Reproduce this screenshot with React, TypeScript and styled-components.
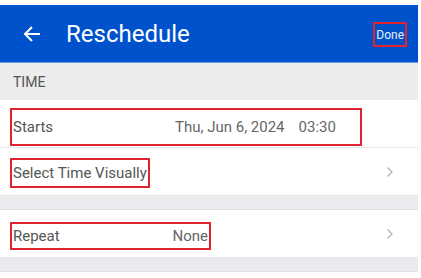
import React, { FC } from "react";
import styled, { createGlobalStyle } from "styled-components";

const GlobalStyle = createGlobalStyle`
  html, body {
    margin: 0;
    padding: 0;
    background: #fff;
  }
  body {
    font-family: Roboto, "Noto Sans", sans-serif;
  }
`;

const Screen = styled.div`
  width: 418px;
  padding-top: 5px;
`;

const Header = styled.div`
  height: 57px;
  background-color: #0052cc;
  border-bottom: 1px solid #6f9be0;
  display: flex;
  align-items: center;
  color: #fff;
`;

const BackButton = styled.button`
  width: 48px;
  height: 100%;
  margin-left: 8px;
  padding: 0;
  border: none;
  background: none;
  display: flex;
  align-items: center;
  justify-content: center;
  color: #fff;
`;

const Title = styled.h1`
  flex: 1;
  margin: 0 0 0 10px;
  font-size: 24px;
  font-weight: 400;
`;

const Marked = styled.div`
  border: 2px solid #e0232e;
  box-sizing: border-box;
  display: flex;
  align-items: center;
`;

const DoneButton = styled(Marked)`
  margin-right: 11px;
  margin-top: 2px;
  height: 25px;
  padding: 0 1px;
  font-size: 12px;
  color: #e8eef8;
`;

const SectionLabel = styled.div`
  height: 37px;
  background-color: #ececec;
  display: flex;
  align-items: center;
  padding-left: 13px;
  font-size: 14px;
  color: #555;
`;

const Row = styled.div`
  height: 47px;
  background: #fff;
  border-bottom: 1px solid #e6e6e6;
  display: flex;
  align-items: center;
  padding: 0 10px;
  font-size: 15px;
  color: #555;
`;

const RowBox = styled(Marked)<{ $width?: number; $height: number; $shift: number }>`
  width: ${({ $width }) => ($width ? `${$width}px` : "auto")};
  height: ${({ $height }) => $height}px;
  margin-top: ${({ $shift }) => $shift}px;
  padding: 0 1px;
`;

const Label = styled.span`
  width: 162px;
`;

const Value = styled.span`
  color: #666;
`;

const Time = styled(Value)`
  margin-left: 14px;
`;

const Chevron = styled.span`
  margin-left: auto;
  margin-right: 14px;
  display: flex;
  color: #b5b5b5;
`;

const Gap = styled.div`
  height: 13px;
  background-color: #e9ebee;
  border-bottom: 1px solid #e2e2e2;
`;

const ChevronIcon = () => (
  <Chevron>
    <svg width="8" height="12" viewBox="0 0 8 12">
      <path d="M1.5 1.5 L6 6 L1.5 10.5" fill="none" stroke="currentColor" strokeWidth="1.3" />
    </svg>
  </Chevron>
);

const App: FC = () => {
  return (
    <>
      <GlobalStyle />
      <Screen>
        <Header>
          <BackButton aria-label="Back">
            <svg width="20" height="20" viewBox="0 0 20 20">
              <path
                d="M18 10 H3 M10 3 L3 10 L10 17"
                fill="none"
                stroke="#fff"
                strokeWidth="2"
              />
            </svg>
          </BackButton>
          <Title>Reschedule</Title>
          <DoneButton>Done</DoneButton>
        </Header>
        <SectionLabel>TIME</SectionLabel>
        <Row>
          <RowBox $width={352} $height={38} $shift={6}>
            <Label>Starts</Label>
            <Value>Thu, Jun 6, 2024</Value>
            <Time>03:30</Time>
          </RowBox>
        </Row>
        <Row>
          <RowBox $height={30} $shift={2}>Select Time Visually</RowBox>
          <ChevronIcon />
        </Row>
        <Gap />
        <Row>
          <RowBox $width={201} $height={28} $shift={4}>
            <Label>Repeat</Label>
            <Value>None</Value>
          </RowBox>
          <ChevronIcon />
        </Row>
        <Gap />
      </Screen>
    </>
  );
};

export default App;
